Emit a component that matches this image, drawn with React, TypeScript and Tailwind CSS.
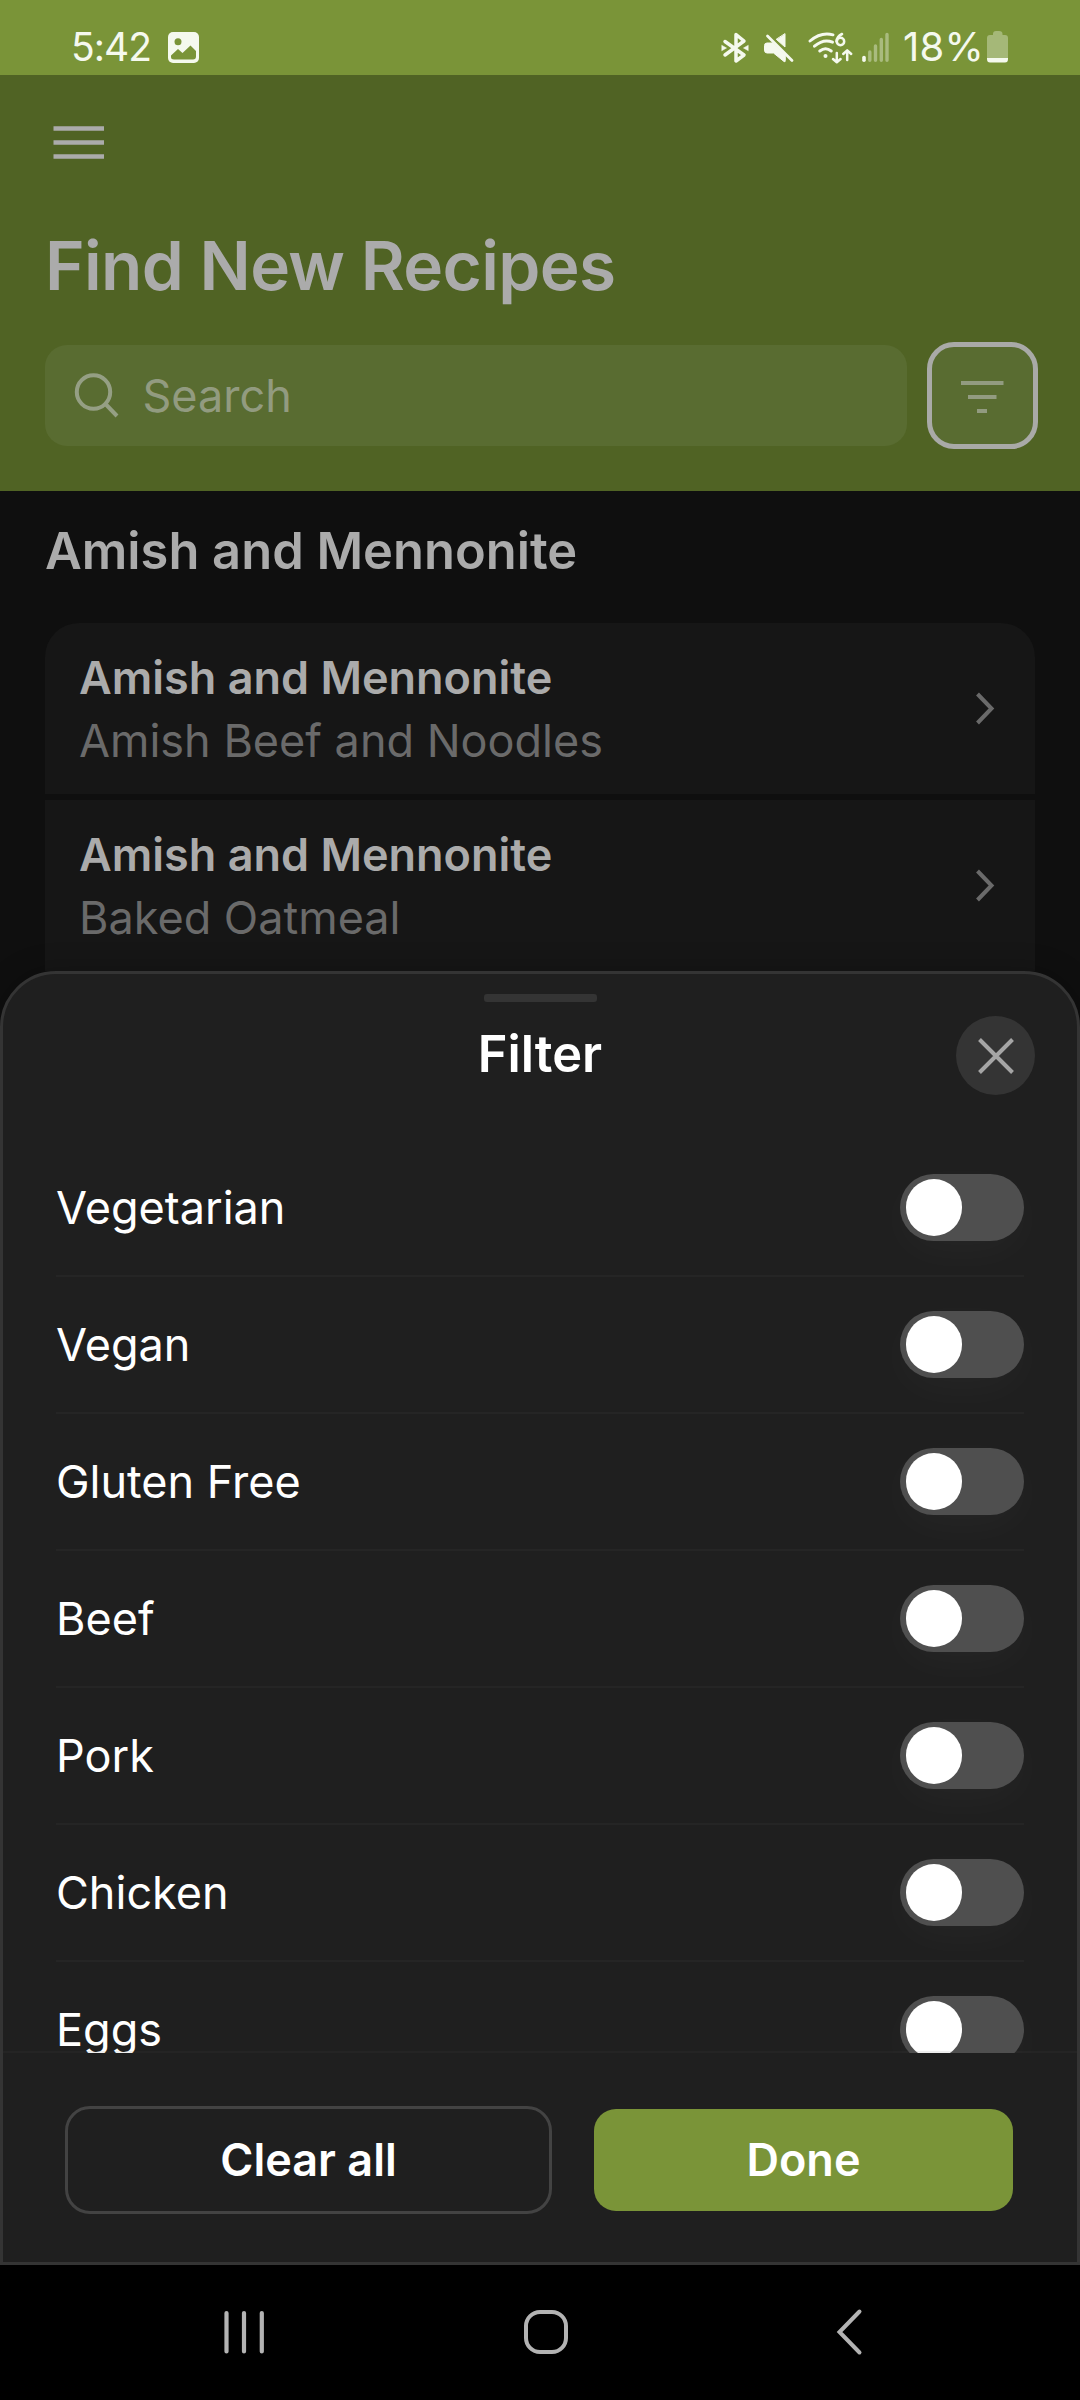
import { useState } from 'react';
import { clsx } from 'clsx';

const recipes = [
  { id: 1, category: 'Amish and Mennonite', name: 'Amish Beef and Noodles' },
  { id: 2, category: 'Amish and Mennonite', name: 'Baked Oatmeal' },
];

const filters = ['Vegetarian', 'Vegan', 'Gluten Free', 'Beef', 'Pork', 'Chicken', 'Eggs'];

function StatusIcons() {
  return (
    <svg width="186" height="36" viewBox="720 30 186 36" fill="none" stroke="#f5f9ee" strokeLinecap="round" strokeLinejoin="round">
      {/* bluetooth */}
      <path d="M725 41.5 744 55 736 61V34.500L744 41 725 55" strokeWidth="3.500" />
      <path d="M722 45.500 726.500 48 722 50.500zM748 45.500 743.500 48 748 50.500z" fill="#f5f9ee" stroke="#f5f9ee" strokeWidth=".6" />
      {/* muted speaker */}
      <path d="M785 34V47L776.500 39.500zM773 43H767Q764.500 43 764.500 45.500V50Q764.500 53 767 53H773.500L784 61.500Q785.300 62.500 785.300 60.500V54.500z" fill="#f5f9ee" stroke="#f5f9ee" strokeWidth="1" />
      <path d="M767.500 36 792 60.500" strokeWidth="2.800" />
      {/* wifi */}
      <path d="M810 41Q821 31.500 833 34.800M814.500 46.200Q823.500 38.500 832.500 42.200M819.800 51Q825.500 46.500 831.200 51" strokeWidth="2.900" />
      <circle cx="825.500" cy="56" r="2" fill="#f5f9ee" stroke="none" />
      <path d="M842 34Q837 36.500 836.500 41.500" strokeWidth="2.600" />
      <circle cx="840.500" cy="41.500" r="3.700" strokeWidth="2.500" />
      <path d="M836.800 53V62M833 59 836.800 62.300 840.600 59M847.200 60V50.500M843.200 54 847.200 50.300 851.200 54" strokeWidth="2.500" />
      {/* signal */}
      <path d="M864 57.500V60.300" strokeWidth="3.600" />
      <path d="M869.800 52V60.300M875.500 46V60.300M881.300 39.500V60.300M887 34.500V60.300" strokeWidth="3.400" stroke="#a9bb7e" />
    </svg>
  );
}

function StatusBar() {
  return (
    <div className="flex h-[75px] shrink-0 items-start bg-[#7a9438] pt-[27px] text-[#f5f9ee]">
      <span className="ml-[71px] w-[85px] text-[39px] leading-[40px] tracking-[-1px]">5:42</span>
      <svg className="ml-[12px] mt-[5px]" width="31" height="31" viewBox="0 0 31 31">
        <rect width="31" height="31" rx="5" fill="#f5f9ee" />
        <circle cx="10" cy="9.700" r="3.500" fill="#7a9438" />
        <path d="M3 23.500 10 17 14.500 21 22.500 13.500 28 19V24.500Q28 27.500 25 27.500H6Q3 27.500 3 25z" fill="#7a9438" />
      </svg>
      <div className="ml-[521px] mt-[3px]">
        <StatusIcons />
      </div>
      <span className="-ml-[3px] w-[84px] whitespace-nowrap text-[40px] leading-[40px] tracking-[0.3px]">18%</span>
      <svg className="mt-[4px]" width="22" height="32" viewBox="0 0 22 32">
        <path d="M6 3Q6 0 9 0H12Q15.500 0 15.500 3V4H18Q21 4 21 7V27H0V7Q0 4 3 4H6z" fill="#a5b878" />
        <path d="M0 27H21V28Q21 31.500 18 31.500H3Q0 31.500 0 28z" fill="#f5f9ee" />
      </svg>
    </div>
  );
}

function Header() {
  return (
    <header className="flex h-[416px] shrink-0 flex-col bg-[#506324] px-[45px]">
      <svg className="ml-[8px] mt-[50px]" width="52" height="35" viewBox="0 0 52 35" stroke="#ababab" strokeWidth="4.500">
        <path d="M.5 3.500H51M.5 17.500H51M.5 31.500H51" />
      </svg>
      <h1 className="mt-[65px] text-[67.5px] font-semibold leading-[81px] tracking-[-0.65px] text-[#ababab]">Find New Recipes</h1>
      <div className="mt-[36px] flex items-center gap-[20px]">
        <div className="flex h-[101px] w-[862px] shrink-0 items-center rounded-[22px] bg-[#596c31] pl-[29px]">
          <svg width="46" height="46" viewBox="0 0 46 46" fill="none" stroke="#959f84" strokeWidth="4">
            <circle cx="19.500" cy="19" r="16.700" />
            <path d="M31.500 31 43 43" />
          </svg>
          <span className="ml-[22.5px] text-[45px] leading-[60px] text-[#929b80]">Search</span>
        </div>
        <button className="flex h-[107px] w-[111px] shrink-0 items-center justify-center rounded-[27px] border-[5px] border-[#a9aaa7] bg-[#596c31]">
          <svg width="43" height="34" viewBox="0 0 43 34" stroke="#929b80" strokeWidth="3.800">
            <path d="M0 4H42.500M7 18H35.500M16 32H26" />
          </svg>
        </button>
      </div>
    </header>
  );
}

function RecipeList() {
  return (
    <main className="flex h-[480px] shrink-0 flex-col px-[45px]">
      <h2 className="mt-[29px] text-[50.6px] font-semibold leading-[61px] text-[#ababab]">Amish and Mennonite</h2>
      <ul className="mt-[42px] flex flex-col gap-[6px] overflow-hidden rounded-t-[34px]">
        {recipes.map((recipe) => (
          <li key={recipe.id} className="flex h-[171px] items-center justify-between bg-[#161616] pl-[34px] pr-[40px]">
            <div className="text-[45px] leading-[63px]">
              <p className="font-semibold text-[#ababab]">{recipe.category}</p>
              <p className="text-[#6a6a6a]">{recipe.name}</p>
            </div>
            <svg width="20" height="34" viewBox="0 0 20 34" fill="none" stroke="#6a6a6a" strokeWidth="4">
              <path d="M2.500 2 16.500 16.500 2.500 31" />
            </svg>
          </li>
        ))}
      </ul>
    </main>
  );
}

function Toggle({ checked, onChange }: { checked: boolean; onChange: () => void }) {
  return (
    <button
      role="switch"
      aria-checked={checked}
      onClick={onChange}
      className={clsx(
        'flex h-[67px] w-[124px] items-center rounded-full px-[6px] shadow-[0_11px_44px_rgba(255,255,255,0.03)]',
        checked ? 'justify-end bg-[#7a9438]' : 'justify-start bg-[#4f4f4f]',
      )}
    >
      <span className="h-[57px] w-[56px] rounded-full bg-white" />
    </button>
  );
}

function FilterSheet() {
  const [selected, setSelected] = useState<string[]>([]);

  const toggle = (name: string) =>
    setSelected((prev) => (prev.includes(name) ? prev.filter((n) => n !== name) : [...prev, name]));

  return (
    <section className="flex h-[1294px] shrink-0 flex-col rounded-t-[56px] border-[3px] border-[#343434] bg-[#1f1f1f] shadow-[0_0_28px_rgba(0,0,0,0.25)]">
      <div className="relative flex h-[166px] shrink-0 flex-col items-center">
        <div className="mt-[20px] h-[8px] w-[113px] rounded-[3px] bg-[#343434]" />
        <h2 className="mt-[21px] text-[50.6px] font-semibold leading-[61px] text-white">Filter</h2>
        <button className="absolute right-[42px] top-[42px] flex size-[79px] items-center justify-center rounded-full bg-[#343434]">
          <svg width="36" height="36" viewBox="0 0 36 36" stroke="#a5a5a5" strokeWidth="4">
            <path d="M1.500 1.500 34.500 34.500M34.500 1.500 1.500 34.500" />
          </svg>
        </button>
      </div>

      <ul className="h-[913px] shrink-0 overflow-hidden px-[53px]">
        {filters.map((name) => (
          <li key={name} className="flex h-[137px] items-center justify-between border-b-2 border-[#252525]">
            <span className="text-[45px] leading-[60px] text-white">{name}</span>
            <Toggle checked={selected.includes(name)} onChange={() => toggle(name)} />
          </li>
        ))}
      </ul>

      <div className="relative -mt-[2px] flex grow items-start gap-[42px] border-t-2 border-[#575757]/10 bg-[#1f1f1f] bg-clip-padding pl-[62px] pt-[53px] text-[45px] font-semibold text-white">
        <button onClick={() => setSelected([])} className="h-[108px] w-[487px] rounded-[25px] border-[3px] border-[#434343]">
          Clear all
        </button>
        <button className="mt-[3px] h-[102px] w-[419px] rounded-[22px] bg-[#7a9438]">Done</button>
      </div>
    </section>
  );
}

function NavBar() {
  return (
    <nav className="flex h-[135px] shrink-0 items-center bg-black pb-[1px] pl-[222px]">
      <svg width="44" height="46" viewBox="0 0 44 46" stroke="#b3b3b3" strokeWidth="4.200" strokeLinecap="round">
        <path d="M4.500 4V42.500M22 4V42.500M39.800 4V42.500" />
      </svg>
      <div className="ml-[258px] h-[44px] w-[44px] rounded-[16px] border-4 border-[#b3b3b3]" />
      <svg className="ml-[267px]" width="28" height="48" viewBox="0 0 28 48" fill="none" stroke="#b3b3b3" strokeWidth="4" strokeLinecap="round">
        <path d="M24.500 3.500 4.500 24 24.500 44.500" />
      </svg>
    </nav>
  );
}

export default function App() {
  return (
    <div className="flex h-[2400px] w-[1080px] flex-col overflow-hidden bg-[#0f0f0f] font-['Inter',sans-serif]">
      <StatusBar />
      <Header />
      <RecipeList />
      <FilterSheet />
      <NavBar />
    </div>
  );
}
